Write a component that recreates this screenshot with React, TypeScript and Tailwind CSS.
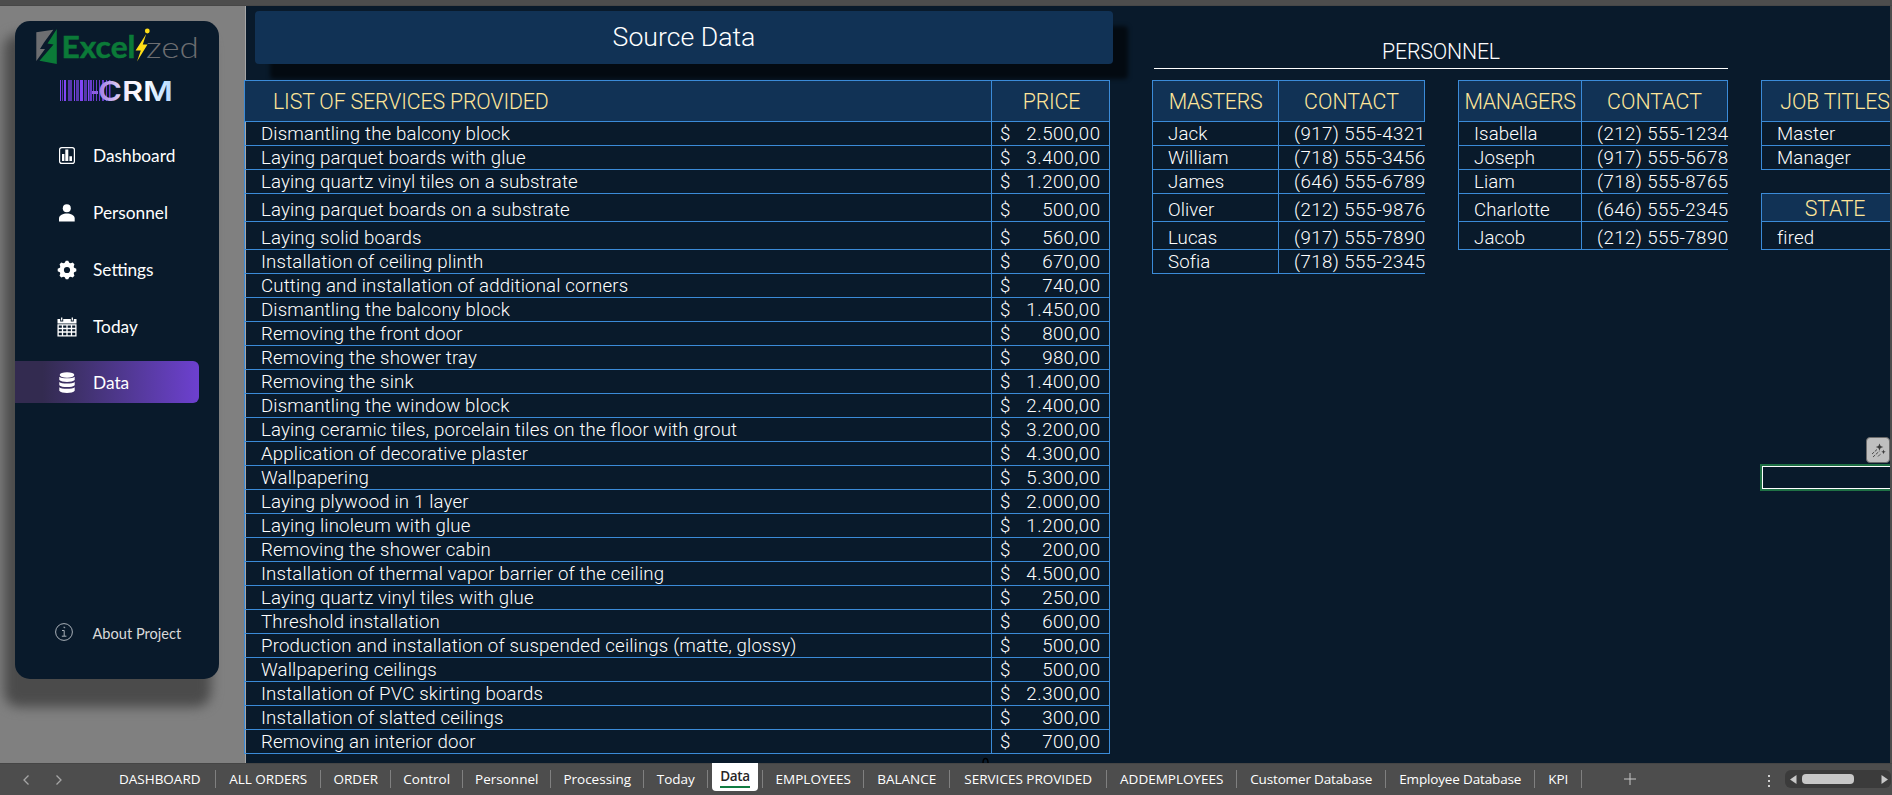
import React from 'react';
import clsx from 'clsx';

interface Service {
  name: string;
  price: string;
}

interface Person {
  name: string;
  phone: string;
}

const services: Service[] = [
  { name: 'Dismantling the balcony block', price: '2.500,00' },
  { name: 'Laying parquet boards with glue', price: '3.400,00' },
  { name: 'Laying quartz vinyl tiles on a substrate', price: '1.200,00' },
  { name: 'Laying parquet boards on a substrate', price: '500,00' },
  { name: 'Laying solid boards', price: '560,00' },
  { name: 'Installation of ceiling plinth', price: '670,00' },
  { name: 'Cutting and installation of additional corners', price: '740,00' },
  { name: 'Dismantling the balcony block', price: '1.450,00' },
  { name: 'Removing the front door', price: '800,00' },
  { name: 'Removing the shower tray', price: '980,00' },
  { name: 'Removing the sink', price: '1.400,00' },
  { name: 'Dismantling the window block', price: '2.400,00' },
  { name: 'Laying ceramic tiles, porcelain tiles on the floor with grout', price: '3.200,00' },
  { name: 'Application of decorative plaster', price: '4.300,00' },
  { name: 'Wallpapering', price: '5.300,00' },
  { name: 'Laying plywood in 1 layer', price: '2.000,00' },
  { name: 'Laying linoleum with glue', price: '1.200,00' },
  { name: 'Removing the shower cabin', price: '200,00' },
  { name: 'Installation of thermal vapor barrier of the ceiling', price: '4.500,00' },
  { name: 'Laying quartz vinyl tiles with glue', price: '250,00' },
  { name: 'Threshold installation', price: '600,00' },
  { name: 'Production and installation of suspended ceilings (matte, glossy)', price: '500,00' },
  { name: 'Wallpapering ceilings', price: '500,00' },
  { name: 'Installation of PVC skirting boards', price: '2.300,00' },
  { name: 'Installation of slatted ceilings', price: '300,00' },
  { name: 'Removing an interior door', price: '700,00' },
];

const masters: Person[] = [
  { name: 'Jack', phone: '(917) 555-4321' },
  { name: 'William', phone: '(718) 555-3456' },
  { name: 'James', phone: '(646) 555-6789' },
  { name: 'Oliver', phone: '(212) 555-9876' },
  { name: 'Lucas', phone: '(917) 555-7890' },
  { name: 'Sofia', phone: '(718) 555-2345' },
];

const managers: Person[] = [
  { name: 'Isabella', phone: '(212) 555-1234' },
  { name: 'Joseph', phone: '(917) 555-5678' },
  { name: 'Liam', phone: '(718) 555-8765' },
  { name: 'Charlotte', phone: '(646) 555-2345' },
  { name: 'Jacob', phone: '(212) 555-7890' },
];

const tabs = [
  { label: 'DASHBOARD', width: 'w-[112px]' },
  { label: 'ALL ORDERS', width: 'w-[105px]' },
  { label: 'ORDER', width: 'w-[70px]' },
  { label: 'Control', width: 'w-[72px]' },
  { label: 'Personnel', width: 'w-[88px]' },
  { label: 'Processing', width: 'w-[93px]' },
  { label: 'Today', width: 'w-[64px]' },
  { label: 'Data', width: 'w-[55px]' },
  { label: 'EMPLOYEES', width: 'w-[101px]' },
  { label: 'BALANCE', width: 'w-[86px]' },
  { label: 'SERVICES PROVIDED', width: 'w-[157px]' },
  { label: 'ADDEMPLOYEES', width: 'w-[130px]' },
  { label: 'Customer Database', width: 'w-[149px] tracking-[-0.15px]' },
  { label: 'Employee Database', width: 'w-[149px] tracking-[-0.15px]' },
  { label: 'KPI', width: 'w-[47px]' },
];

// Rows 4 and 5 of the sheet are a little taller than the rest
const rowHeight = (index: number) => (index === 3 || index === 4 ? 'h-[28px]' : 'h-[24px]');

const headClass =
  'flex items-center border-r border-b border-[#3b8bd8] bg-[#113255] pt-[2px] text-[21.33px] leading-none tracking-[-0.15px] text-[#ffe699]';
const rowClass = 'flex items-end border-b border-[#3b8bd8] text-[18.67px] leading-[22px] whitespace-nowrap';

const Logo = () => (
  <svg width="174" height="96" viewBox="0 0 174 96" className="absolute top-[4px] left-[18px]">
    <defs>
      <linearGradient id="crm" gradientUnits="userSpaceOnUse" x1="58" y1="0" x2="138" y2="0">
        <stop offset="0" stopColor="#8d5fe0" />
        <stop offset="0.2" stopColor="#b79bea" />
        <stop offset="0.45" stopColor="#f4eefc" />
        <stop offset="0.66" stopColor="#ffffff" />
        <stop offset="1" stopColor="#b5d9ff" />
      </linearGradient>
    </defs>
    <path d="M3.3 7.3 20.3 4.800 11 17.500l-4 6.500h5L3.300 36z" fill="#6d6e71" />
    <path d="M23.800 4v35L6.500 35.800 20.500 19.500l-6-1z" fill="#0b7a38" />
    <text x="28.5" y="32.5" fontFamily="Lato, sans-serif" fontWeight="700" fontSize="30.5" fill="#0b7a38" stroke="#0b7a38" strokeWidth="0.5" textLength="74" lengthAdjust="spacingAndGlyphs">
      Excel
    </text>
    <text x="113" y="32.5" fontFamily="Lato, sans-serif" fontWeight="300" fontSize="30" fill="#6d6e71" textLength="53" lengthAdjust="spacingAndGlyphs">
      zed
    </text>
    <path d="M113.2 9 102.6 25.500h5.200L104 36.500l10.500-16.900h-4.700z" fill="#ffde17" />
    <circle cx="114.3" cy="6" r="2.4" fill="#ffde17" />
    <g fill="#8146f5">
      <path d="M27 55h1v21h-1zM31 55h2v21h-2zM41 55h1v21h-1zM47 55h3v21h-3zM55 55h1.5v21H55z" />
      <path d="M35 55h4v21h-4zM43 55h3v21h-3zM51 55h3v21h-3zM29 55h1v21h-1z" opacity="0.65" />
      <path d="M57 55h2v21h-2zM60 55h1v21h-1zM63 55h1v21h-1zM66 55h1v21h-1zM69 55h2v21h-2zM73 55h1v21h-1zM76 55h1.5v21H76z" opacity="0.8" />
    </g>
    <path d="M59 66h6v3h-6z" fill="#8d5fe0" />
    <text x="65" y="75.5" fontFamily="Inter, sans-serif" fontWeight="600" fontSize="27" fill="url(#crm)" textLength="75" lengthAdjust="spacingAndGlyphs">
      CRM
    </text>
  </svg>
);

const DashboardIcon = () => (
  <svg width="16" height="17" viewBox="0 0 16 17">
    <rect x="0.6" y="0.6" width="14.8" height="15.8" rx="2.2" fill="none" stroke="#fff" strokeWidth="1.2" />
    <path d="M3 7h2.4v7H3zM6.3 2.5h3V14h-3zM10.4 9.3h2.6V14h-2.6z" fill="#fff" />
  </svg>
);

const PersonIcon = () => (
  <svg width="16" height="18" viewBox="0 0 16 18" fill="#fff">
    <circle cx="7.8" cy="4.2" r="4" />
    <path d="M0 17.6v-3.2C0 11.4 4.2 9.6 7.9 9.6s7.8 1.8 7.8 4.8v3.2z" />
  </svg>
);

const GearIcon = () => (
  <svg width="20" height="20" viewBox="0 0 20 20">
    <g fill="#fff">
      <circle cx="10" cy="10" r="7.4" />
      {[0, 45, 90, 135, 180, 225, 270, 315].map(angle => (
        <path key={angle} d="M7.2 3.8 8.8.7h2.4l1.6 3.1z" transform={`rotate(${angle} 10 10)`} />
      ))}
    </g>
    <circle cx="10" cy="10" r="3.1" fill="#091a2b" />
  </svg>
);

const CalendarIcon = () => (
  <svg width="20" height="20" viewBox="0 0 20 20">
    <path d="M.5 2h2.7v2.5h3V2h7.6v2.5h3V2h2.7v4.5H.5z" fill="#fff" />
    <path d="M4.7.5v3M15.3.5v3" stroke="#fff" strokeWidth="1.3" />
    <path d="M1.1 7.8h17.8v11H1.1zM1 11.5h18M1 15h18M5.5 8v11M10 8v11M14.5 8v11" fill="none" stroke="#fff" strokeWidth="1.3" />
  </svg>
);

const DatabaseIcon = () => (
  <svg width="16" height="22" viewBox="0 0 16 22" fill="#fff">
    <ellipse cx="8" cy="3" rx="7.3" ry="2.7" />
    <path d="M.3 4.8c2 2 13.400 2 15.400 0V8c-2 2.500-13.400 2.500-15.400 0z" />
    <path d="M.3 10c2 2 13.400 2 15.400 0v3.200c-2 2.500-13.400 2.500-15.400 0z" />
    <path d="M.3 15.200c2 2 13.400 2 15.400 0v3.500c-2 3-13.400 3-15.400 0z" />
  </svg>
);

const navItems = [
  { label: 'Dashboard', icon: <DashboardIcon />, className: 'h-[57px] w-full' },
  { label: 'Personnel', icon: <PersonIcon />, className: 'h-[57px] w-full' },
  { label: 'Settings', icon: <GearIcon />, className: 'h-[57px] w-full' },
  { label: 'Today', icon: <CalendarIcon />, className: 'h-[57px] w-full' },
  {
    label: 'Data',
    icon: <DatabaseIcon />,
    className: 'mt-[6px] h-[42px] w-[184px] rounded-r-md bg-linear-to-r from-[#332b50] from-15% to-[#6d40d0] pt-px',
  },
];

const Sidebar = () => (
  <aside className="relative isolate w-[244px] shrink-0 overflow-clip bg-[#808080] pt-[15px] pl-[15px]">
    {/* Soft shadow behind the panel */}
    <div className="absolute top-[28px] left-[4px] -z-10 h-[673px] w-[207px] rounded-[15px] bg-[#4b4b4b] blur-[6px]" />
    <div className="relative flex h-[658px] w-[204px] flex-col rounded-[15px] bg-[#091a2b] pt-[106px] font-[Lato,sans-serif] text-white">
      <Logo />
      <nav>
        {navItems.map(item => (
          <button key={item.label} className={clsx('flex items-center text-[17.3px]', item.className)}>
            <span className="ml-[37px] flex w-[30px] justify-center">{item.icon}</span>
            <span className="ml-[11px]">{item.label}</span>
          </button>
        ))}
      </nav>
      <button className="mt-auto mb-[34px] flex items-center text-[14.6px] text-[#d9d9d9]">
        <svg width="18" height="18" viewBox="0 0 18 18" className="mb-px ml-[40px]" fill="none" stroke="#a9b0b8">
          <circle cx="9" cy="9" r="8.4" />
          <path d="M7 7.500h2.200v5.500M6.800 13.200h4.600M8.500 4.200h1.200v1" />
        </svg>
        <span className="mt-[3px] ml-[19.500px]">About Project</span>
      </button>
    </div>
  </aside>
);

interface PeopleTableProps {
  title: string;
  people: Person[];
  nameWidth: string;
}

const PeopleTable: React.FC<PeopleTableProps> = ({ title, people, nameWidth }) => (
  <div className="border-t border-l border-[#3b8bd8]">
    <div className="flex h-[41px]">
      <div className={clsx(headClass, nameWidth, 'justify-center')}>
        <span className="tracking-[-0.3px]">{title}</span>
      </div>
      <div className={clsx(headClass, 'w-[146px] justify-center')}>
        <span className="tracking-[0.05px]">CONTACT</span>
      </div>
    </div>
    {people.map((person, index) => (
      <div key={person.phone} className={clsx('flex', rowHeight(index))}>
        <div className={clsx(rowClass, nameWidth, 'border-r pl-[15px] tracking-[0.1px]')}>{person.name}</div>
        <div className={clsx(rowClass, 'w-[146px] pl-[15px] tracking-[0.43px]')}>{person.phone}</div>
      </div>
    ))}
  </div>
);

const Sheet = () => (
  <main className="relative flex min-w-0 flex-1 border-r-2 border-[#4d4d4d] bg-[#091a2b] font-[Roboto,sans-serif] font-light text-white">
    <div className="w-px shrink-0 bg-[#808080]" />
    <div className="w-px shrink-0 bg-[#a6a6a6]" />

    <section className="w-[906px] shrink-0 pt-[5px]">
      <h1 className="ml-[9px] flex h-[53px] w-[858px] items-center justify-center rounded-[4px] bg-[#113255] pb-px text-[26.67px] leading-none shadow-[15px_15px_4px_rgba(0,0,0,0.6)]">
        Source Data
      </h1>
      <div className="relative mt-[16px] -ml-[2px] w-[866px] border-t border-l border-[#3b8bd8]">
        <div className="flex h-[41px]">
          <div className={clsx(headClass, 'w-[747px] pl-[28px]')}>LIST OF SERVICES PROVIDED</div>
          <div className={clsx(headClass, 'w-[118px] justify-center pl-[2px]')}>PRICE</div>
        </div>
        {services.map((service, index) => (
          <div key={index} className={clsx('flex', rowHeight(index))}>
            <div className={clsx(rowClass, 'w-[747px] border-r pl-[16px] tracking-[0.15px]')}>{service.name}</div>
            <div className={clsx(rowClass, 'w-[118px] justify-between border-r pr-[8.500px] pl-[8px] tracking-[0.5px]')}>
              <span>$</span>
              <span>{service.price}</span>
            </div>
          </div>
        ))}
      </div>
      <svg width="8" height="6" viewBox="0 0 8 6" className="mt-[3px] ml-[736px]">
        <path d="M1 6C1 0 6 0 6 6" fill="none" stroke="#000" strokeWidth="1.5" />
      </svg>
    </section>

    <section className="w-[609px] shrink-0 pt-[32px]">
      <h2 className="ml-[2px] h-[31px] w-[574px] border-b border-white text-center text-[21.33px] leading-[28px] tracking-[-0.2px]">
        PERSONNEL
      </h2>
      <div className="mt-[11px] flex items-start gap-[33px]">
        <PeopleTable title="MASTERS" people={masters} nameWidth="w-[126px]" />
        <PeopleTable title="MANAGERS" people={managers} nameWidth="w-[123px]" />
      </div>
    </section>

    <section className="min-w-0 flex-1 overflow-clip pt-[74px]">
      <div className="w-[150px] border-t border-l border-[#3b8bd8]">
        <div className={clsx(headClass, 'h-[41px] justify-center pr-[2px] whitespace-nowrap')}>JOB TITLES</div>
        <div className={clsx(rowClass, 'h-[24px] pl-[15px] tracking-[0.17px]')}>Master</div>
        <div className={clsx(rowClass, 'h-[24px] pl-[15px] tracking-[0.17px]')}>Manager</div>
      </div>
      <div className="mt-[23px] w-[150px] border-t border-l border-[#3b8bd8]">
        <div className={clsx(headClass, 'h-[28px] justify-center pr-[2px]')}>STATE</div>
        <div className={clsx(rowClass, 'h-[28px] pl-[15px] tracking-[0.17px]')}>fired</div>
      </div>
    </section>

    {/* Selected cell and its quick action */}
    <div className="absolute top-[458px] right-0 h-[27px] w-[130px] border-y-2 border-l-2 border-[#1f7145]">
      <div className="h-full border-y border-l border-white" />
    </div>
    <button className="absolute top-[431px] right-0 flex h-[26px] w-[24px] items-center justify-center rounded-[4px] border border-[#6b6b6b] bg-[#bfbfbf]">
      <svg width="15" height="15" viewBox="0 0 15 15">
        <path d="M8.500.5 9.600 3l2.700 1-2.700 1-1.100 2.600L7.400 5 4.800 4l2.600-1zM12.500 6.500l.6 1.700 1.600.6-1.600.6-.6 1.800-.6-1.800-1.600-.6 1.600-.6z" fill="#3c3c3c" />
        <path d="M1 11l5-4.500M2 14l6.500-6M7 13.500l3-3" stroke="#4a4a4a" strokeDasharray="3 1" />
      </svg>
    </button>
  </main>
);

const TabBar = () => (
  <footer className="flex h-[32px] shrink-0 items-start border-t border-[#454545] bg-[#4d4d4d] font-['Open_Sans',sans-serif] text-[13.5px] text-white">
    <div className="flex h-[31px] w-[104px] shrink-0 items-center gap-[26px] pl-[22.500px]">
      {['M5.500 0.500 1 5l4.500 4.500', 'M0.500 0.500 5 5 0.500 9.500'].map(d => (
        <svg key={d} width="7" height="10" viewBox="0 0 7 10" fill="none" stroke="#a6a6a6" strokeWidth="1.300">
          <path d={d} />
        </svg>
      ))}
    </div>
    {tabs.map(tab =>
      tab.label === 'Data' ? (
        <div key={tab.label} className={clsx('relative h-[31px] shrink-0', tab.width)}>
          <div className="-mt-px ml-[4px] flex h-[28px] w-[46px] flex-col items-center rounded-b-[4px] bg-white pt-[4px] font-semibold tracking-[-0.3px] text-[#262626]">
            <span className="leading-[18px]">Data</span>
            <span className="mt-px h-[2px] w-[30px] bg-[#107c41]" />
          </div>
          <span className="absolute top-[6px] right-0 h-[18px] w-px bg-[#808080]" />
        </div>
      ) : (
        <div key={tab.label} className={clsx('relative flex h-[31px] shrink-0 items-center justify-center pr-[0.5px] whitespace-nowrap', tab.width)}>
          {tab.label}
          <span className="absolute top-[6px] right-0 h-[18px] w-px bg-[#808080]" />
        </div>
      )
    )}
    <svg width="12" height="12" viewBox="0 0 12 12" className="mt-[9px] ml-[42px]" stroke="#c8c8c8">
      <path d="M6 0v12M0 6h12" />
    </svg>
    <div className="mt-[11px] ml-auto flex w-[2px] flex-col gap-[3px]">
      <span className="h-[2px] bg-[#d0d0d0]" />
      <span className="h-[2px] bg-[#d0d0d0]" />
      <span className="h-[2px] bg-[#d0d0d0]" />
    </div>
    <div className="mt-[6px] mr-px ml-[15px] flex h-[18px] w-[106px] items-center rounded-[6px] bg-[#3b3b3b]">
      <svg width="7" height="9" viewBox="0 0 7 9" className="ml-[5px]" fill="#c8c8c8">
        <path d="M6.500 0v9L0 4.500z" />
      </svg>
      <div className="ml-[5px] h-[10px] w-[52px] rounded-[4px] bg-[#c8c8c8]" />
      <svg width="7" height="9" viewBox="0 0 7 9" className="ml-auto mr-[3px]" fill="#c8c8c8">
        <path d="M.5 0v9L7 4.500z" />
      </svg>
    </div>
  </footer>
);

const App: React.FC = () => {
  return (
    <div className="flex h-[795px] w-[1892px] flex-col overflow-hidden bg-[#4d4d4d]">
      <div className="h-[6px] shrink-0 border-b border-[#474747]" />
      <div className="flex min-h-0 flex-1">
        <Sidebar />
        <Sheet />
      </div>
      <TabBar />
    </div>
  );
};

export default App;
